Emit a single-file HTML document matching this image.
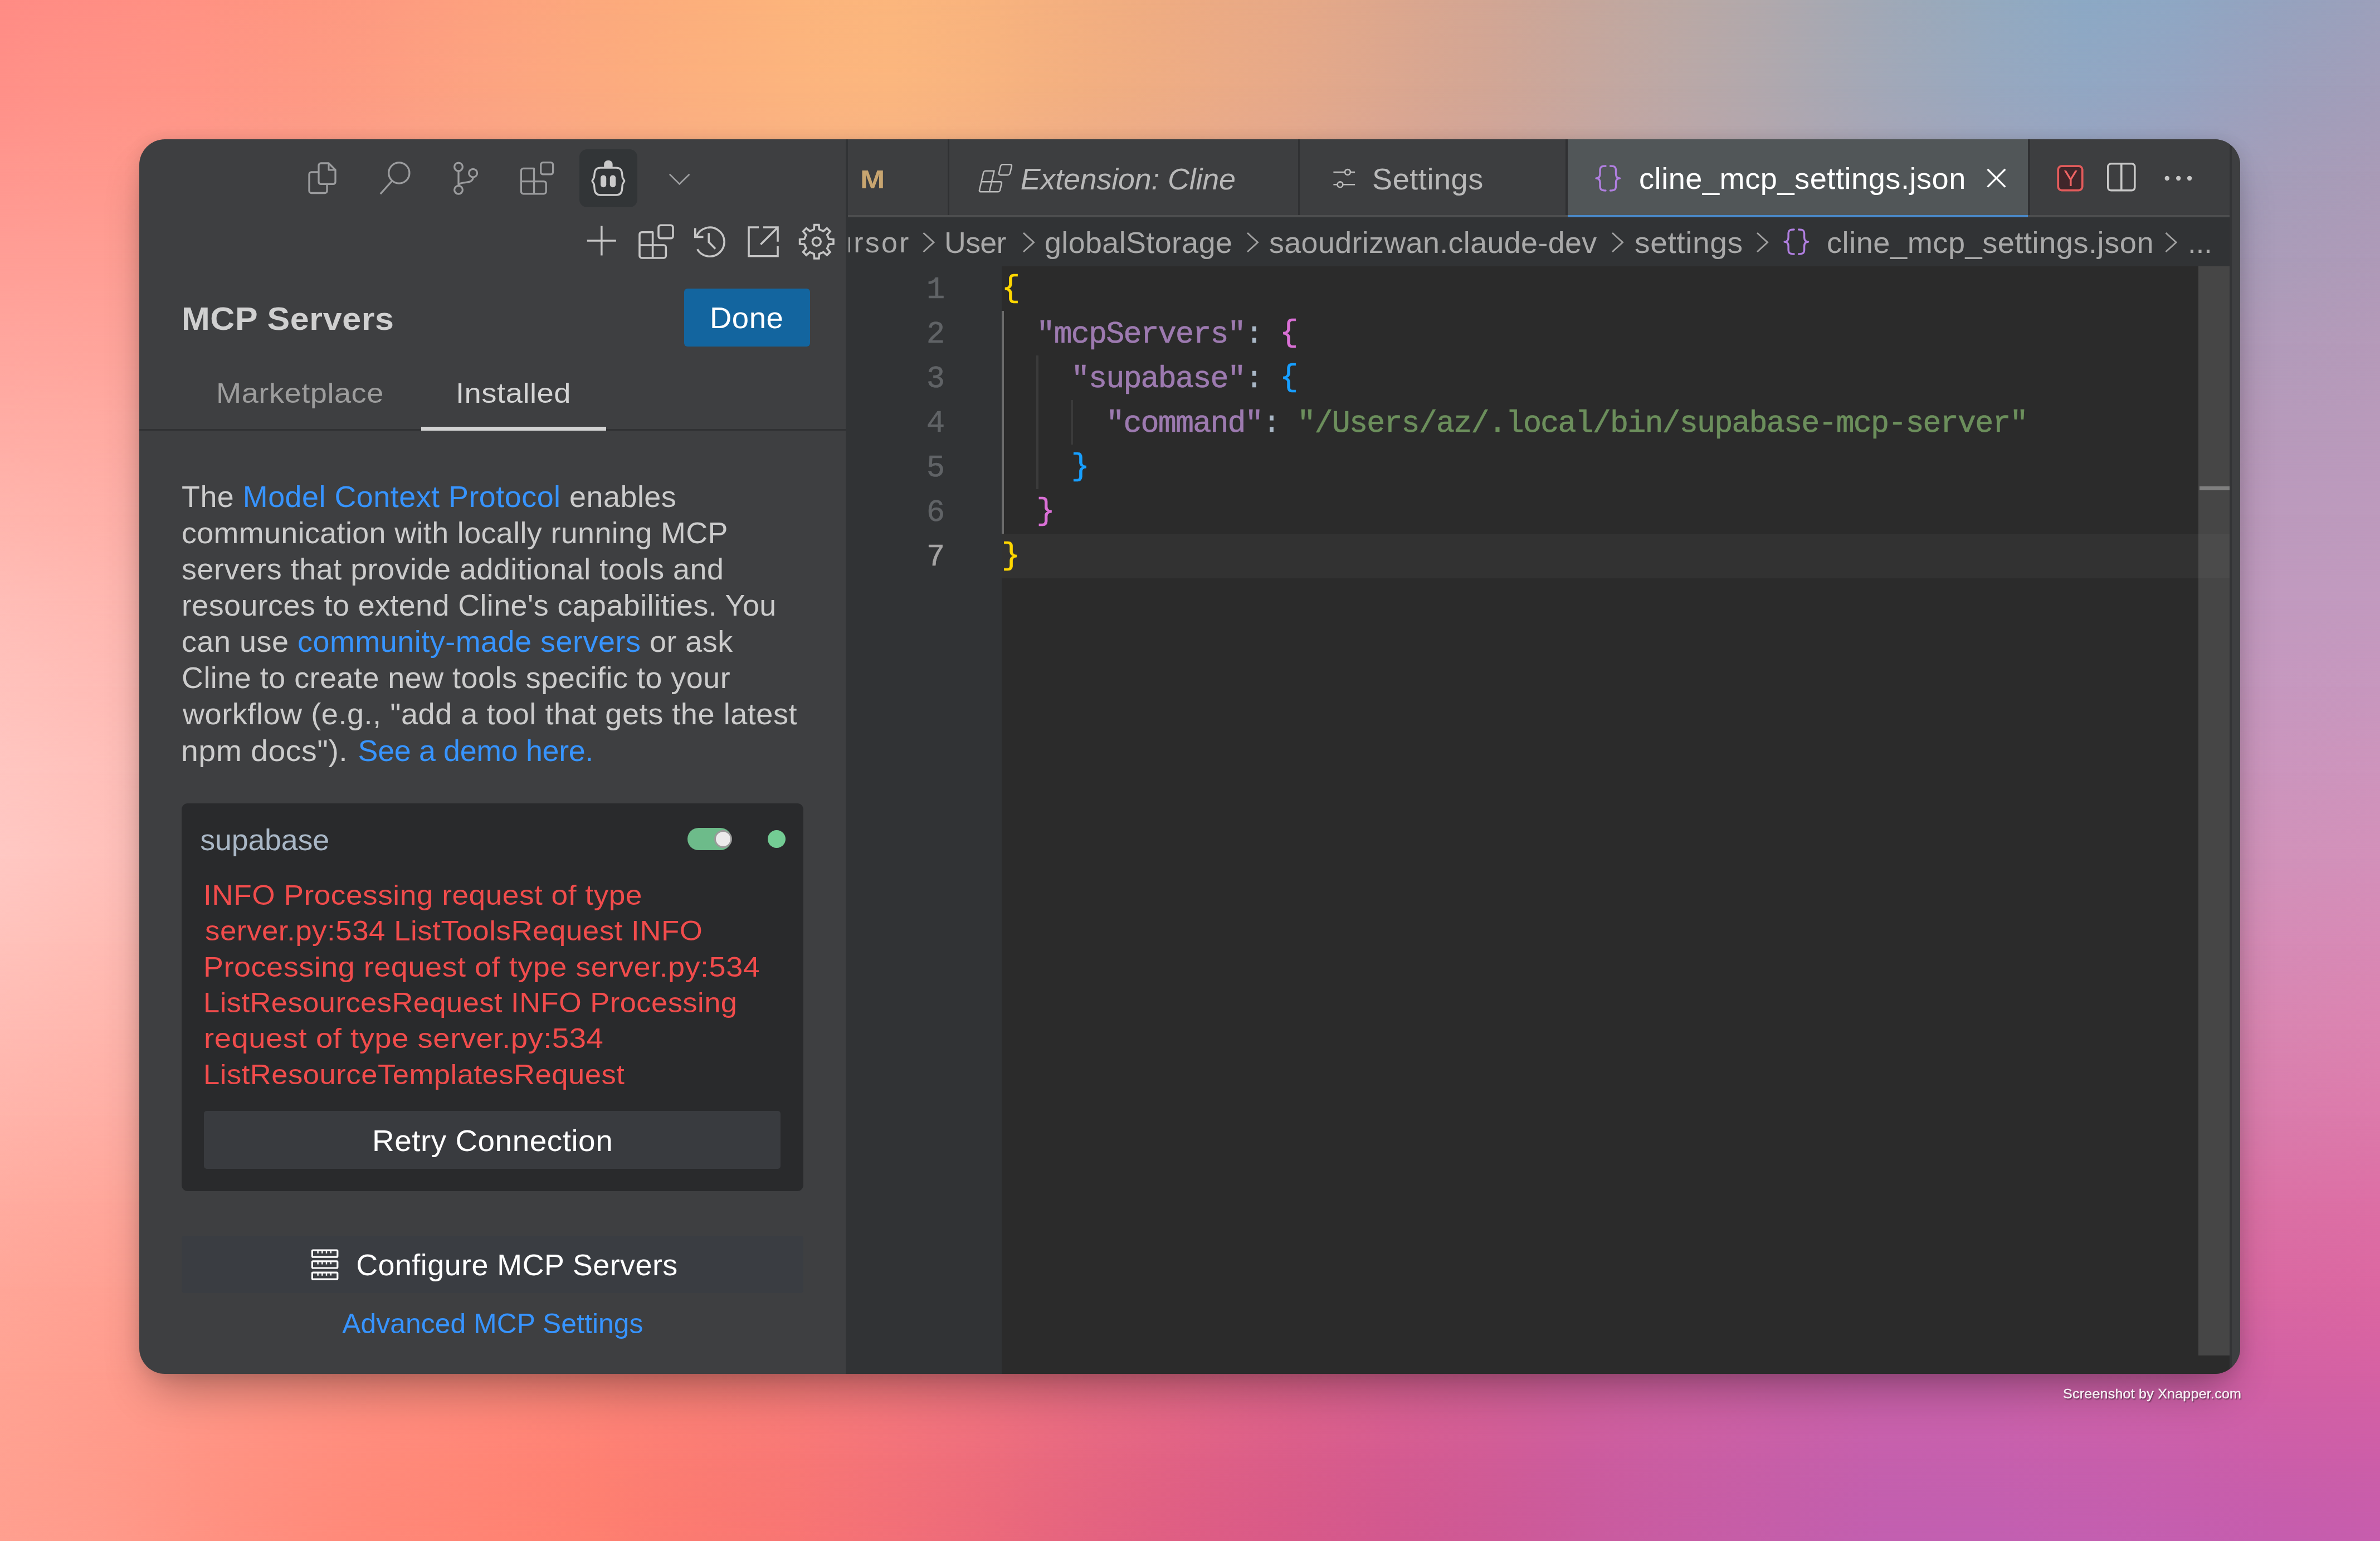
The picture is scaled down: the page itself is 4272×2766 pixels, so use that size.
<!DOCTYPE html>
<html lang="en">
<head>
<meta charset="utf-8">
<title>MCP Servers</title>
<style>
*{box-sizing:border-box;margin:0;padding:0}
html,body{width:4272px;height:2766px;overflow:hidden;background:#f08a80}
body{position:relative;font-family:"Liberation Sans",sans-serif;color:#ccc}
#bg{position:absolute;left:0;top:0;width:4272px;height:2766px;overflow:hidden}
.bgl{position:absolute;left:0;top:0;width:4272px;height:2766px}
#win{position:absolute;left:250px;top:250px;width:3771px;height:2216px;border-radius:46px;overflow:hidden;background:#3e3f41;
box-shadow:0 45px 80px -20px rgba(0,0,0,.31),0 2px 30px rgba(0,0,0,.11)}
#win>*{position:absolute}
.t{position:absolute;white-space:nowrap;transform-origin:0 50%}
.code{font-family:"Liberation Mono",monospace;font-size:55px;line-height:80px;letter-spacing:-1.806px;white-space:pre;-webkit-text-stroke:0.7px}
.br{position:relative;top:-3px}
#icons{left:0;top:0;width:3771px;height:2215px}

</style>
</head>
<body>
<div id="bg">
<div class="bgl" style="background:linear-gradient(90deg,#ff8c85 0px,#ff8e84 178px,#ff9283 356px,#fe9781 534px,#fd9c80 712px,#fda27e 890px,#fca97d 1068px,#fcaf7c 1246px,#fcb47c 1424px,#fbb67d 1602px,#f8b37e 1780px,#f3af80 1958px,#edab83 2136px,#e7a987 2314px,#dda78d 2492px,#d3a694 2670px,#c6a79c 2848px,#baa9a5 3026px,#aea9ae 3204px,#a0a9b7 3382px,#95aabf 3560px,#8ca9c5 3738px,#8fa7c4 3916px,#96a3bf 4094px,#9ca0bb 4272px);"></div>
<div class="bgl" style="background:linear-gradient(90deg,#ff9088 0px,#ff9287 178px,#ff9586 356px,#fe9984 534px,#fd9e82 712px,#fca481 890px,#fcaa7f 1068px,#fcb07e 1246px,#fcb47e 1424px,#fbb67e 1602px,#f7b37f 1780px,#f2af81 1958px,#edac85 2136px,#e6a989 2314px,#dca78f 2492px,#d2a695 2670px,#c6a79e 2848px,#baa8a7 3026px,#aea8af 3204px,#a2a8b8 3382px,#98a8bf 3560px,#91a7c3 3738px,#95a4c1 3916px,#9da0bc 4094px,#a29db9 4272px);-webkit-mask-image:linear-gradient(180deg,transparent 0px,#000 154px);mask-image:linear-gradient(180deg,transparent 0px,#000 154px);"></div>
<div class="bgl" style="background:linear-gradient(90deg,#ff978f 0px,#ff988d 178px,#fe9a8c 356px,#fd9d8a 534px,#fba189 712px,#faa587 890px,#f9aa86 1068px,#f9af85 1246px,#f9b284 1424px,#f7b385 1602px,#f4b086 1780px,#eead89 1958px,#e9aa8c 2136px,#e3a890 2314px,#daa695 2492px,#d1a59b 2670px,#c6a6a2 2848px,#bca6aa 3026px,#b2a6b1 3204px,#a8a5b8 3382px,#a0a4bd 3560px,#9ba3c0 3738px,#9fa0bd 3916px,#a59db9 4094px,#a99bb7 4272px);-webkit-mask-image:linear-gradient(180deg,transparent 154px,#000 308px);mask-image:linear-gradient(180deg,transparent 154px,#000 308px);"></div>
<div class="bgl" style="background:linear-gradient(90deg,#ff9e96 0px,#ff9e94 178px,#fe9f92 356px,#fca092 534px,#f9a291 712px,#f7a591 890px,#f6a890 1068px,#f4aa90 1246px,#f3ac90 1424px,#f0ad91 1602px,#edab92 1780px,#e8a895 1958px,#e3a697 2136px,#dea59a 2314px,#d7a49e 2492px,#d0a3a2 2670px,#c8a3a8 2848px,#c0a3ad 3026px,#b9a2b2 3204px,#b1a2b7 3382px,#aba1bb 3560px,#a6a0bd 3738px,#a79ebc 3916px,#ab9cb9 4094px,#ae9ab8 4272px);-webkit-mask-image:linear-gradient(180deg,transparent 308px,#000 462px);mask-image:linear-gradient(180deg,transparent 308px,#000 462px);"></div>
<div class="bgl" style="background:linear-gradient(90deg,#ffa69e 0px,#ffa49b 178px,#fda49a 356px,#faa49a 534px,#f7a49b 712px,#f4a49c 890px,#f1a59d 1068px,#eea59d 1246px,#eba69e 1424px,#e8a5a0 1602px,#e5a4a1 1780px,#e1a3a3 1958px,#dda2a5 2136px,#d9a1a6 2314px,#d4a0a9 2492px,#d0a0ab 2670px,#ca9fae 2848px,#c59fb0 3026px,#c19fb3 3204px,#bc9eb6 3382px,#b79db8 3560px,#b39dba 3738px,#b29cba 3916px,#b29bba 4094px,#b59ab9 4272px);-webkit-mask-image:linear-gradient(180deg,transparent 462px,#000 616px);mask-image:linear-gradient(180deg,transparent 462px,#000 616px);"></div>
<div class="bgl" style="background:linear-gradient(90deg,#ffada5 0px,#ffaba2 178px,#fda8a0 356px,#faa8a1 534px,#f6a7a2 712px,#f3a6a4 890px,#f0a6a5 1068px,#eca5a6 1246px,#e9a5a7 1424px,#e5a4a9 1602px,#e2a3aa 1780px,#dea2ab 1958px,#dba2ad 2136px,#d8a1ae 2314px,#d4a0af 2492px,#d09fb1 2670px,#cd9fb2 2848px,#c99eb4 3026px,#c69db5 3204px,#c29db6 3382px,#bf9cb8 3560px,#bb9bb9 3738px,#b89bba 3916px,#b79abb 4094px,#b99abb 4272px);-webkit-mask-image:linear-gradient(180deg,transparent 616px,#000 770px);mask-image:linear-gradient(180deg,transparent 616px,#000 770px);"></div>
<div class="bgl" style="background:linear-gradient(90deg,#ffb5ad 0px,#ffb1a9 178px,#fdaea6 356px,#faada7 534px,#f6aca8 712px,#f3abaa 890px,#f0aaab 1068px,#eda9ac 1246px,#eaa8ad 1424px,#e6a7ae 1602px,#e3a6af 1780px,#e0a5b0 1958px,#dda4b1 2136px,#daa3b2 2314px,#d6a2b4 2492px,#d3a1b5 2670px,#d0a0b6 2848px,#cc9fb7 3026px,#c99eb8 3204px,#c69db9 3382px,#c39dba 3560px,#bf9bbb 3738px,#bc9bbc 3916px,#bc9abd 4094px,#bd9abd 4272px);-webkit-mask-image:linear-gradient(180deg,transparent 770px,#000 924px);mask-image:linear-gradient(180deg,transparent 770px,#000 924px);"></div>
<div class="bgl" style="background:linear-gradient(90deg,#ffbdb7 0px,#ffb8b1 178px,#fdb4ad 356px,#fab3ae 534px,#f7b1af 712px,#f4b0b0 890px,#f1afb1 1068px,#eeaeb2 1246px,#ebacb2 1424px,#e8abb3 1602px,#e5aab4 1780px,#e2a8b5 1958px,#dfa7b6 2136px,#dca6b7 2314px,#d9a5b8 2492px,#d6a3b9 2670px,#d3a2ba 2848px,#d0a1ba 3026px,#cda0bb 3204px,#ca9ebc 3382px,#c79dbd 3560px,#c49cbe 3738px,#c19bbf 3916px,#c19abf 4094px,#c29abf 4272px);-webkit-mask-image:linear-gradient(180deg,transparent 924px,#000 1078px);mask-image:linear-gradient(180deg,transparent 924px,#000 1078px);"></div>
<div class="bgl" style="background:linear-gradient(90deg,#ffc2bc 0px,#ffbcb6 178px,#fdb8b2 356px,#fbb6b2 534px,#f8b4b3 712px,#f5b3b3 890px,#f3b1b4 1068px,#f0b0b5 1246px,#edaeb5 1424px,#eaadb6 1602px,#e7abb7 1780px,#e4aab7 1958px,#e2a8b8 2136px,#dfa7b8 2314px,#dca5b9 2492px,#daa4ba 2670px,#d7a2bb 2848px,#d4a1bb 3026px,#d19fbc 3204px,#cf9ebc 3382px,#cc9cbd 3560px,#c99bbe 3738px,#c699be 3916px,#c698bf 4094px,#c797be 4272px);-webkit-mask-image:linear-gradient(180deg,transparent 1078px,#000 1232px);mask-image:linear-gradient(180deg,transparent 1078px,#000 1232px);"></div>
<div class="bgl" style="background:linear-gradient(90deg,#ffc6c1 0px,#ffc0ba 178px,#fdbbb5 356px,#fbb9b5 534px,#f9b7b6 712px,#f6b5b6 890px,#f4b3b7 1068px,#f1b2b7 1246px,#efb0b7 1424px,#ecaeb8 1602px,#eaacb8 1780px,#e7aab9 1958px,#e5a9b9 2136px,#e3a7b9 2314px,#e0a5ba 2492px,#dea3ba 2670px,#dba1bb 2848px,#d9a0bb 3026px,#d69ebb 3204px,#d49cbc 3382px,#d19bbc 3560px,#cf99bd 3738px,#cd97bd 3916px,#cc95bd 4094px,#ce94bc 4272px);-webkit-mask-image:linear-gradient(180deg,transparent 1232px,#000 1386px);mask-image:linear-gradient(180deg,transparent 1232px,#000 1386px);"></div>
<div class="bgl" style="background:linear-gradient(90deg,#ffc8c3 0px,#ffc1bb 178px,#febbb6 356px,#fcb9b6 534px,#f9b7b7 712px,#f7b5b7 890px,#f5b3b7 1068px,#f3b1b7 1246px,#f0b0b7 1424px,#eeadb8 1602px,#ecacb8 1780px,#eaa9b8 1958px,#e7a8b8 2136px,#e5a6b9 2314px,#e3a4b9 2492px,#e1a2b9 2670px,#dea0ba 2848px,#dc9eba 3026px,#da9cba 3204px,#d89aba 3382px,#d698ba 3560px,#d396bb 3738px,#d194bb 3916px,#d192ba 4094px,#d390ba 4272px);-webkit-mask-image:linear-gradient(180deg,transparent 1386px,#000 1540px);mask-image:linear-gradient(180deg,transparent 1386px,#000 1540px);"></div>
<div class="bgl" style="background:linear-gradient(90deg,#ffc2bb 0px,#ffbcb4 178px,#feb6b0 356px,#fcb4b0 534px,#fab2b0 712px,#f8b0b1 890px,#f6aeb1 1068px,#f4acb1 1246px,#f2aab2 1424px,#efa8b2 1602px,#eea6b2 1780px,#eba4b3 1958px,#e9a2b3 2136px,#e7a0b3 2314px,#e59eb3 2492px,#e39cb4 2670px,#e19ab4 2848px,#df98b4 3026px,#dd96b5 3204px,#db94b5 3382px,#d992b5 3560px,#d790b6 3738px,#d58eb6 3916px,#d68bb6 4094px,#d889b5 4272px);-webkit-mask-image:linear-gradient(180deg,transparent 1540px,#000 1694px);mask-image:linear-gradient(180deg,transparent 1540px,#000 1694px);"></div>
<div class="bgl" style="background:linear-gradient(90deg,#ffbbb3 0px,#ffb6ad 178px,#feb1a9 356px,#fcafa9 534px,#faacaa 712px,#f8aaaa 890px,#f6a8aa 1068px,#f4a6ab 1246px,#f3a4ab 1424px,#f0a2ac 1602px,#efa0ac 1780px,#ed9ead 1958px,#eb9cad 2136px,#e99aad 2314px,#e798ae 2492px,#e596ae 2670px,#e394af 2848px,#e192af 3026px,#e090b0 3204px,#de8db0 3382px,#dc8bb0 3560px,#da89b1 3738px,#d887b1 3916px,#d985b1 4094px,#dc83b0 4272px);-webkit-mask-image:linear-gradient(180deg,transparent 1694px,#000 1848px);mask-image:linear-gradient(180deg,transparent 1694px,#000 1848px);"></div>
<div class="bgl" style="background:linear-gradient(90deg,#ffb4aa 0px,#ffafa5 178px,#feaba1 356px,#fca8a2 534px,#faa6a2 712px,#f8a4a3 890px,#f7a2a3 1068px,#f5a0a4 1246px,#f39ea4 1424px,#f19ba5 1602px,#ef99a6 1780px,#ed97a6 1958px,#ec95a7 2136px,#ea93a7 2314px,#e890a8 2492px,#e68ea8 2670px,#e48ca9 2848px,#e38aa9 3026px,#e188aa 3204px,#df85aa 3382px,#dd83ab 3560px,#db81ab 3738px,#da7fac 3916px,#da7cac 4094px,#dd7aab 4272px);-webkit-mask-image:linear-gradient(180deg,transparent 1848px,#000 2002px);mask-image:linear-gradient(180deg,transparent 1848px,#000 2002px);"></div>
<div class="bgl" style="background:linear-gradient(90deg,#ffaca0 0px,#ffa79b 178px,#fea398 356px,#fca199 534px,#fa9e99 712px,#f99c9a 890px,#f7999b 1068px,#f5979b 1246px,#f3959c 1424px,#f1929d 1602px,#f0909d 1780px,#ee8d9e 1958px,#ec8b9f 2136px,#ea899f 2314px,#e886a0 2492px,#e784a1 2670px,#e581a1 2848px,#e37fa2 3026px,#e27da3 3204px,#e07aa3 3382px,#de78a4 3560px,#dc75a5 3738px,#da73a5 3916px,#db71a5 4094px,#dd6fa5 4272px);-webkit-mask-image:linear-gradient(180deg,transparent 2002px,#000 2156px);mask-image:linear-gradient(180deg,transparent 2002px,#000 2156px);"></div>
<div class="bgl" style="background:linear-gradient(90deg,#ffa698 0px,#ffa193 178px,#fe9d90 356px,#fd9a90 534px,#fb9790 712px,#fa948f 890px,#f89190 1068px,#f68e90 1246px,#f48b91 1424px,#f28892 1602px,#f08693 1780px,#ed8295 1958px,#eb7f96 2136px,#e87d97 2314px,#e67a99 2492px,#e4789b 2670px,#e1769d 2848px,#e0749e 3026px,#de729f 3204px,#dc70a1 3382px,#db6ea1 3560px,#da6ca1 3738px,#d96aa2 3916px,#da68a2 4094px,#dc67a1 4272px);-webkit-mask-image:linear-gradient(180deg,transparent 2156px,#000 2310px);mask-image:linear-gradient(180deg,transparent 2156px,#000 2310px);"></div>
<div class="bgl" style="background:linear-gradient(90deg,#ffa393 0px,#ff9d8e 178px,#ff9788 356px,#ff9284 534px,#fe8d7f 712px,#fe897c 890px,#fc857a 1068px,#fa8179 1246px,#f87d7b 1424px,#f4797e 1602px,#ef7481 1780px,#e96e85 1958px,#e46a88 2136px,#df658c 2314px,#da6392 2492px,#d66297 2670px,#d2629d 2848px,#d062a1 3026px,#cd62a5 3204px,#cc62a9 3382px,#cc62a9 3560px,#cf62a7 3738px,#d061a6 3916px,#d361a4 4094px,#d661a3 4272px);-webkit-mask-image:linear-gradient(180deg,transparent 2310px,#000 2464px);mask-image:linear-gradient(180deg,transparent 2310px,#000 2464px);"></div>
<div class="bgl" style="background:linear-gradient(90deg,#ffa191 0px,#ff9b8b 178px,#ff9484 356px,#ff8f7f 534px,#ff8a7a 712px,#ff8576 890px,#fe8173 1068px,#fb7c73 1246px,#f87875 1424px,#f37279 1602px,#ed6d7c 1780px,#e66781 1958px,#e06185 2136px,#da5d89 2314px,#d55b90 2492px,#d15c96 2670px,#cc5c9e 2848px,#ca5ea3 3026px,#c75fa8 3204px,#c560ad 3382px,#c660ae 3560px,#c75fac 3738px,#c95fab 3916px,#cc5ea9 4094px,#cd5ea8 4272px);-webkit-mask-image:linear-gradient(180deg,transparent 2464px,#000 2618px);mask-image:linear-gradient(180deg,transparent 2464px,#000 2618px);"></div>
<div class="bgl" style="background:linear-gradient(90deg,#ff9f8f 0px,#ff9a8a 178px,#ff9282 356px,#ff8c7c 534px,#ff8777 712px,#ff8373 890px,#fe7f70 1068px,#fb7a71 1246px,#f87573 1424px,#f26f77 1602px,#eb697b 1780px,#e46380 1958px,#de5d84 2136px,#d85988 2314px,#d2588f 2492px,#ce5996 2670px,#ca5b9e 2848px,#c75ca4 3026px,#c45eaa 3204px,#c25fb0 3382px,#c25fb1 3560px,#c35fb0 3738px,#c45eaf 3916px,#c55dae 4094px,#c65dad 4272px);-webkit-mask-image:linear-gradient(180deg,transparent 2618px,#000 2766px);mask-image:linear-gradient(180deg,transparent 2618px,#000 2766px);"></div>
</div>
<div id="win">
<div style="left:790.0px;top:18.0px;width:104.0px;height:104.0px;background:#323537;border-radius:14px;"></div>
<div class="t" style="left:76.45px;top:285.70px;font-size:58.0px;line-height:72px;letter-spacing:0.558px;color:#d0d0d0;transform:scaleX(1.0509);font-weight:700;">MCP Servers</div>
<div style="left:978.0px;top:268.0px;width:226.0px;height:104.0px;background:#13659f;border-radius:6px;"></div>
<div class="t" style="left:1023.75px;top:287.36px;font-size:53.8px;line-height:67px;letter-spacing:0.517px;color:#ffffff;transform:scaleX(1.0125);">Done</div>
<div class="t" style="left:138.04px;top:425.38px;font-size:49.7px;line-height:62px;letter-spacing:0.478px;color:#9d9d9d;transform:scaleX(1.0905);">Marketplace</div>
<div class="t" style="left:568.33px;top:425.38px;font-size:49.7px;line-height:62px;letter-spacing:0.478px;color:#d4d4d4;transform:scaleX(1.0935);">Installed</div>
<div style="left:0.0px;top:520.0px;width:1268.0px;height:3.0px;background:#303133;"></div>
<div style="left:506.0px;top:516.0px;width:332.0px;height:7.0px;background:#d2d2d2;"></div>
<div class="t" style="left:76.00px;top:608.06px;font-size:53.8px;line-height:67px;letter-spacing:0.517px;color:#cccccc;transform:scaleX(1.0005);">The <span style="color:#3794ff">Model Context Protocol</span> enables</div>
<div class="t" style="left:76.00px;top:673.13px;font-size:53.8px;line-height:67px;letter-spacing:0.396px;color:#cccccc;">communication with locally running MCP</div>
<div class="t" style="left:76.00px;top:738.20px;font-size:53.8px;line-height:67px;letter-spacing:0.517px;color:#cccccc;transform:scaleX(1.0014);">servers that provide additional tools and</div>
<div class="t" style="left:76.00px;top:803.27px;font-size:53.8px;line-height:67px;letter-spacing:0.438px;color:#cccccc;">resources to extend Cline's capabilities. You</div>
<div class="t" style="left:76.00px;top:868.34px;font-size:53.8px;line-height:67px;letter-spacing:0.517px;color:#cccccc;transform:scaleX(1.0020);">can use <span style="color:#3794ff">community-made servers</span> or ask</div>
<div class="t" style="left:76.00px;top:933.41px;font-size:53.8px;line-height:67px;letter-spacing:0.517px;color:#cccccc;transform:scaleX(1.0006);">Cline to create new tools specific to your</div>
<div class="t" style="left:78.00px;top:998.48px;font-size:53.8px;line-height:67px;letter-spacing:0.517px;color:#cccccc;transform:scaleX(1.0060);">workflow (e.g., "add a tool that gets the latest</div>
<div class="t" style="left:75.41px;top:1063.55px;font-size:53.8px;line-height:67px;letter-spacing:0.517px;color:#cccccc;transform:scaleX(1.0289);">npm docs").</div>
<div class="t" style="left:392.60px;top:1063.55px;font-size:53.8px;line-height:67px;letter-spacing:-0.335px;color:#3794ff;">See a demo here.</div>
<div style="left:76.0px;top:1192.0px;width:1116.0px;height:696.0px;background:#292a2c;border-radius:11px;"></div>
<div class="t" style="left:109.30px;top:1223.56px;font-size:53.8px;line-height:67px;letter-spacing:-0.213px;color:#a9b7c6;">supabase</div>
<div style="left:984.0px;top:1236.0px;width:79.0px;height:40.0px;background:#6dbb8a;border-radius:20px;"></div>
<div style="left:1032.0px;top:1240.0px;width:32.0px;height:32.0px;background:#ebebeb;border-radius:50%;border:3.5px solid #9a9a9a;"></div>
<div style="left:1128.0px;top:1240.0px;width:32.0px;height:32.0px;background:#73cc94;border-radius:50%;"></div>
<div class="t" style="left:114.92px;top:1325.78px;font-size:49.7px;line-height:62px;letter-spacing:0.478px;color:#f14c4c;transform:scaleX(1.0712);">INFO Processing request of type</div>
<div class="t" style="left:118.14px;top:1390.18px;font-size:49.7px;line-height:62px;letter-spacing:0.478px;color:#f14c4c;transform:scaleX(1.0639);">server.py:534 ListToolsRequest INFO</div>
<div class="t" style="left:114.85px;top:1454.58px;font-size:49.7px;line-height:62px;letter-spacing:0.478px;color:#f14c4c;transform:scaleX(1.0867);">Processing request of type server.py:534</div>
<div class="t" style="left:114.98px;top:1518.98px;font-size:49.7px;line-height:62px;letter-spacing:0.478px;color:#f14c4c;transform:scaleX(1.0542);">ListResourcesRequest INFO Processing</div>
<div class="t" style="left:115.91px;top:1583.38px;font-size:49.7px;line-height:62px;letter-spacing:0.478px;color:#f14c4c;transform:scaleX(1.0956);">request of type server.py:534</div>
<div class="t" style="left:114.97px;top:1647.78px;font-size:49.7px;line-height:62px;letter-spacing:0.478px;color:#f14c4c;transform:scaleX(1.0581);">ListResourceTemplatesRequest</div>
<div style="left:116.0px;top:1744.0px;width:1035.0px;height:104.0px;background:#393b3f;border-radius:5px;"></div>
<div class="t" style="left:417.92px;top:1763.76px;font-size:53.8px;line-height:67px;letter-spacing:0.517px;color:#ffffff;transform:scaleX(1.0195);">Retry Connection</div>
<div style="left:76.0px;top:1968.0px;width:1116.0px;height:103.0px;background:#3a3d42;border-radius:5px;"></div>
<div class="t" style="left:389.20px;top:1987.26px;font-size:53.8px;line-height:67px;letter-spacing:0.498px;color:#ffffff;">Configure MCP Servers</div>
<div class="t" style="left:364.30px;top:2095.38px;font-size:49.7px;line-height:62px;letter-spacing:0.124px;color:#3794ff;">Advanced MCP Settings</div>
<div style="left:1268.0px;top:0.0px;width:4.0px;height:2216.0px;background:#313335;"></div>
<div style="left:1272.0px;top:0.0px;width:2480.0px;height:136.0px;background:#3d3e40;"></div>
<div style="left:1272.0px;top:136.0px;width:2480.0px;height:4.0px;background:#4d4e4f;"></div>
<div style="left:2564.0px;top:0.0px;width:826.0px;height:136.0px;background:#515658;"></div>
<div style="left:2564.0px;top:136.0px;width:826.0px;height:4.0px;background:#4a88c7;"></div>
<div style="left:1451.0px;top:0.0px;width:3.0px;height:136.0px;background:#303133;"></div>
<div style="left:2080.0px;top:0.0px;width:3.0px;height:136.0px;background:#303133;"></div>
<div style="left:2560.0px;top:0.0px;width:4.0px;height:136.0px;background:#303133;"></div>
<div style="left:3390.0px;top:0.0px;width:4.0px;height:136.0px;background:#303133;"></div>
<div style="left:1272.0px;top:140.0px;width:2480.0px;height:88.0px;background:#313335;"></div>
<div style="left:1272.0px;top:228.0px;width:276.0px;height:1988.0px;background:#313335;"></div>
<div style="left:1548.0px;top:228.0px;width:2204.0px;height:1988.0px;background:#2b2b2b;"></div>
<div style="left:1548.0px;top:708.0px;width:2204.0px;height:80.0px;background:#323232;"></div>
<div style="left:3696.0px;top:228.0px;width:56.0px;height:1955.0px;background:rgba(115,115,115,.38);"></div>
<div style="left:3698.0px;top:623.0px;width:54.0px;height:7.0px;background:#7f7f7f;"></div>
<div style="left:3752.0px;top:0.0px;width:4.0px;height:2216.0px;background:#333436;"></div>
<div style="left:3756.0px;top:0.0px;width:15.0px;height:2216.0px;background:#3e3f41;"></div>
<div style="left:1548.0px;top:308.0px;width:4.0px;height:400.0px;background:#6b6b6b;"></div>
<div style="left:1610.0px;top:388.0px;width:4.0px;height:240.0px;background:#3b3b3b;"></div>
<div style="left:1672.0px;top:468.0px;width:4.0px;height:80.0px;background:#3b3b3b;"></div>
<div class="t" style="left:1293.57px;top:42.85px;font-size:46.6px;line-height:58px;letter-spacing:0.000px;color:#c8a570;transform:scaleX(1.1424);font-weight:700;">M</div>
<div class="t" style="left:1581.80px;top:37.86px;font-size:53.8px;line-height:67px;letter-spacing:-0.175px;color:#b9b9b9;font-style:italic;">Extension: Cline</div>
<div class="t" style="left:2212.89px;top:37.56px;font-size:53.8px;line-height:67px;letter-spacing:0.517px;color:#b9b9b9;transform:scaleX(1.0067);">Settings</div>
<div class="t" style="left:2692.19px;top:37.36px;font-size:53.8px;line-height:67px;letter-spacing:0.517px;color:#ffffff;transform:scaleX(1.0066);">cline_mcp_settings.json</div>
<div style="left:1272.5px;top:140px;width:400px;height:88px;overflow:hidden"><div class="t" style="left:-51.43px;top:13.48px;font-size:52px;line-height:65px;letter-spacing:3.155px;color:#a9a9a9">cursor</div></div>
<div class="t" style="left:1445.00px;top:151.86px;font-size:53.8px;line-height:67px;letter-spacing:-0.689px;color:#a9a9a9;">User</div>
<div class="t" style="left:1625.00px;top:151.86px;font-size:53.8px;line-height:67px;letter-spacing:0.410px;color:#a9a9a9;">globalStorage</div>
<div class="t" style="left:2028.00px;top:151.86px;font-size:53.8px;line-height:67px;letter-spacing:0.383px;color:#a9a9a9;">saoudrizwan.claude-dev</div>
<div class="t" style="left:2683.57px;top:151.86px;font-size:53.8px;line-height:67px;letter-spacing:0.517px;color:#a9a9a9;transform:scaleX(1.0273);">settings</div>
<div class="t" style="left:3028.99px;top:151.86px;font-size:53.8px;line-height:67px;letter-spacing:0.517px;color:#a9a9a9;transform:scaleX(1.0069);">cline_mcp_settings.json</div>
<div class="t" style="left:3677.00px;top:151.86px;font-size:53.8px;line-height:67px;letter-spacing:-0.447px;color:#a9a9a9;">...</div>
<div class="t code" style="left:1548px;top:230.94px;"><span class="br" style="color:#ffd700">{</span></div>
<div class="t code" style="left:1548px;top:310.94px;"><span style="color:#9d7ab0">  "mcpServers"</span><span style="color:#a9b7c6">: </span><span class="br" style="color:#da70d6">{</span></div>
<div class="t code" style="left:1548px;top:390.94px;"><span style="color:#9d7ab0">    "supabase"</span><span style="color:#a9b7c6">: </span><span class="br" style="color:#179fff">{</span></div>
<div class="t code" style="left:1548px;top:470.94px;"><span style="color:#9d7ab0">      "command"</span><span style="color:#a9b7c6">: </span><span style="color:#6c8f5c">"/Users/az/.local/bin/supabase-mcp-server"</span></div>
<div class="t code" style="left:1548px;top:550.94px;"><span>    </span><span class="br" style="color:#179fff">}</span></div>
<div class="t code" style="left:1548px;top:630.94px;"><span>  </span><span class="br" style="color:#da70d6">}</span></div>
<div class="t code" style="left:1548px;top:710.94px;"><span class="br" style="color:#ffd700">}</span></div>
<div class="t code" style="left:1413px;top:230.94px;color:#606366">1</div>
<div class="t code" style="left:1413px;top:310.94px;color:#606366">2</div>
<div class="t code" style="left:1413px;top:390.94px;color:#606366">3</div>
<div class="t code" style="left:1413px;top:470.94px;color:#606366">4</div>
<div class="t code" style="left:1413px;top:550.94px;color:#606366">5</div>
<div class="t code" style="left:1413px;top:630.94px;color:#606366">6</div>
<div class="t code" style="left:1413px;top:710.94px;color:#a4a3a3">7</div>
<svg id="icons" viewBox="250 250 3771 2215" fill="none" stroke-linecap="butt" stroke-linejoin="round">
<g stroke="#9b9c9e" stroke-width="3.3">
<path d="M576 293H590L602 305V326.4a4 4 0 0 1-4 4H576a4 4 0 0 1-4-4V297a4 4 0 0 1 4-4Z"/>
<path d="M590 293V305H602" stroke-width="3"/>
<path d="M572 309H559a4 4 0 0 0-4 4V342.5a4 4 0 0 0 4 4H583a4 4 0 0 0 4-4V330.4"/>
<circle cx="716.3" cy="310.5" r="18.6"/><path d="M703.5 325L682.8 348.2"/>
<circle cx="823" cy="299.6" r="7.4"/><circle cx="849.1" cy="310.7" r="7.4"/><circle cx="823" cy="340.8" r="7.4"/>
<path d="M823 307V333.4"/><path d="M849.1 318.1C849.1 326 842 327 835 327.6C827 328.3 823 330 823 333.4"/>
<path d="M939.4 302.4H958.5V325.6H976.2a4 4 0 0 1 4 4V343.8a4 4 0 0 1-4 4H939.4a4 4 0 0 1-4-4V306.4a4 4 0 0 1 4-4Z"/>
<path d="M958.5 325.6V347.8M935.4 325.6H958.5"/>
<rect x="970.7" y="291.7" width="21.9" height="21.2" rx="4"/>
<path d="M1201.9 312.7L1219.6 330.3L1237.5 312.7" stroke-width="2.8" stroke-linejoin="miter"/>
</g>
<g stroke="#cacaca" stroke-width="3.3" stroke-linejoin="round">
<path d="M1077.7 301.2H1106Q1115.5 301.2 1116.5 311L1117.3 318.5L1120.8 324.7L1117.3 331L1116.5 340Q1115.5 350 1106 350H1077.7Q1068.2 350 1067.2 340L1066.4 331L1062.9 324.7L1066.4 318.5L1067.2 311Q1068.2 301.2 1077.7 301.2Z"/>
</g>
<path d="M1084.2 301V294.5a7.7 6.8 0 0 1 15.4 0V301Z" fill="#cacaca"/>
<rect x="1078" y="314.5" width="10.2" height="21.8" rx="5" fill="#cacaca"/><rect x="1094.8" y="314.5" width="10.4" height="21.8" rx="5" fill="#cacaca"/>
<g stroke="#c6c6c6" stroke-width="3.6">
<path d="M1053.8 432H1105.9M1079.8 405.6V458.4"/>
<path d="M1152 416.7H1171.6V440H1191.3a4 4 0 0 1 4 4V459a4 4 0 0 1-4 4H1152a4 4 0 0 1-4-4V420.7a4 4 0 0 1 4-4Z"/>
<path d="M1171.6 440V463M1148 440H1171.6"/>
<rect x="1182" y="404.3" width="26" height="23.5" rx="4"/>
<path d="M1250 424.5A26 26 0 1 1 1251.6 447.3"/><path d="M1247.8 409.5V425.4H1262.5" stroke-linejoin="miter"/>
<path d="M1272.2 418.3V434.5L1284 446.4" stroke-linejoin="miter"/>
<path d="M1362 408H1344V459.8H1396V442" stroke-linejoin="miter"/><path d="M1365.4 438.8L1396 408.2"/><path d="M1370 408H1396V433.8" stroke-linejoin="miter"/>
<path d="M1461.1 411.8 L1461.7 403.6 L1469.9 403.6 L1470.5 411.8 L1478.0 414.9 L1484.3 409.6 L1490.0 415.3 L1484.7 421.6 L1487.8 429.1 L1496.0 429.7 L1496.0 437.9 L1487.8 438.5 L1484.7 446.0 L1490.0 452.3 L1484.3 458.0 L1478.0 452.7 L1470.5 455.8 L1469.9 464.0 L1461.7 464.0 L1461.1 455.8 L1453.6 452.7 L1447.3 458.0 L1441.6 452.3 L1446.9 446.0 L1443.8 438.5 L1435.6 437.9 L1435.6 429.7 L1443.8 429.1 L1446.9 421.6 L1441.6 415.3 L1447.3 409.6 L1453.6 414.9Z" stroke-linejoin="miter"/><circle cx="1465.8" cy="433.8" r="7.4"/>
</g>
<g stroke="#ffffff" stroke-width="3.2">
<rect x="560.4" y="2244.1" width="45.4" height="12.1" rx="1.5"/>
<path d="M570.6 2244.1v5.6M578.3 2244.1v5.6M586 2244.1v5.6M593.8 2244.1v5.4" stroke-width="2.4"/>
<rect x="560.4" y="2263.9" width="45.4" height="12.1" rx="1.5"/>
<path d="M570.6 2263.9v5.6M578.3 2263.9v5.6M586 2263.9v5.6M593.8 2263.9v5.4" stroke-width="2.4"/>
<rect x="560.4" y="2284.1" width="45.4" height="12.1" rx="1.5"/>
<path d="M570.6 2284.1v5.6M578.3 2284.1v5.6M586 2284.1v5.6M593.8 2284.1v5.4" stroke-width="2.4"/>
</g>
<g stroke="#b9b9b9" stroke-width="2.6" transform="translate(1756 293.7) skewX(-13)">
<path d="M16 13H31.5V32.5H47a3 3 0 0 1 3 3V47.5a3 3 0 0 1-3 3H16a3 3 0 0 1-3-3V16a3 3 0 0 1 3-3Z"/><path d="M31.5 32.5V50.5M13 32.5H31.5"/><rect x="41" y="1.5" width="20" height="19" rx="3.5"/>
</g>
<g stroke="#b9b9b9" stroke-width="2.6"><path d="M2393.4 309H2414.3M2423.7 309H2432.1M2393.4 331.3H2400.8M2410.2 331.3H2432.1"/><circle cx="2419" cy="309" r="4.9"/><circle cx="2405.5" cy="331.3" r="4.9"/></g>
<g stroke="#b07fe0" stroke-width="3.4" transform="translate(2862.5 296)" stroke-linecap="round"><path d="M19.5 2C11 2 9.5 4.5 9.5 10V16C9.5 21 7 24 2.5 24C7 24 9.5 27 9.5 32V38C9.5 43.5 11 46 19.5 46"/><path d="M28 2C36.5 2 38 4.5 38 10V16C38 21 40.500 24 45 24C40.5 24 38 27 38 32V38C38 43.5 36.5 46 28 46"/></g>
<g stroke="#b07fe0" stroke-width="3.4" transform="translate(3200.6 410)" stroke-linecap="round"><path d="M19.5 2C11 2 9.5 4.5 9.5 10V16C9.5 21 7 24 2.5 24C7 24 9.5 27 9.5 32V38C9.5 43.5 11 46 19.5 46"/><path d="M28 2C36.5 2 38 4.5 38 10V16C38 21 40.500 24 45 24C40.5 24 38 27 38 32V38C38 43.5 36.5 46 28 46"/></g>
<path d="M3567.5 303.7L3599.3 335.6M3599.3 303.7L3567.5 335.6" stroke="#ffffff" stroke-width="3.4"/>
<rect x="3694.2" y="298.1" width="43.5" height="43.5" rx="6.5" fill="#40262a" stroke="#e25b5b" stroke-width="3.8"/>
<g stroke="#c8c8c8" stroke-width="3.6"><rect x="3783.8" y="293.8" width="48" height="48" rx="5.5"/><path d="M3807.8 293.8V341.8"/></g>
<g fill="#c8c8c8"><circle cx="3889.8" cy="320" r="4.2"/><circle cx="3910.2" cy="320" r="4.2"/><circle cx="3930.1" cy="320" r="4.2"/></g>
<g stroke="#a0a0a0" stroke-width="3" stroke-linejoin="miter">
<path d="M1657.5 418L1676.0 435L1657.5 452"/>
<path d="M1837 418L1855.5 435L1837 452"/>
<path d="M2239 418L2257.5 435L2239 452"/>
<path d="M2894 418L2912.5 435L2894 452"/>
<path d="M3154 418L3172.5 435L3154 452"/>
<path d="M3887.5 418L3906.0 435L3887.5 452"/>
</g>
</svg>
<div class="t" style="left:3453.50px;top:44.15px;font-size:41.4px;line-height:52px;letter-spacing:0.000px;color:#f06464;transform:scaleX(0.9259);">Y</div>
</div>
<div class="t" style="left:3702.87px;top:2486.58px;font-size:24.3px;line-height:30px;letter-spacing:0.234px;color:rgba(255,255,255,.9);transform:scaleX(1.0291);text-shadow:1.5px 2px 2px rgba(0,0,0,.5);-webkit-text-stroke:0.35px;">Screenshot by Xnapper.com</div>
</body>
</html>
